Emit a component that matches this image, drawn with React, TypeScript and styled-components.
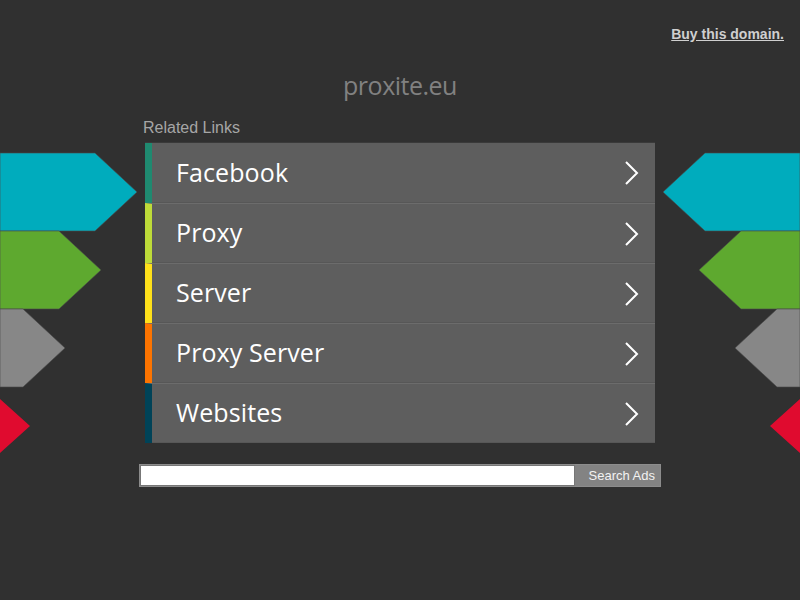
import React from "react";
import styled, { createGlobalStyle } from "styled-components";

const links = [
  { label: "Facebook", color: "#1f8a70" },
  { label: "Proxy", color: "#bedb39" },
  { label: "Server", color: "#ffe11a" },
  { label: "Proxy Server", color: "#fd7400" },
  { label: "Websites", color: "#004358" },
];

const Global = createGlobalStyle`
  html, body {
    margin: 0;
    padding: 0;
    background: #303030;
  }
`;

const App: React.FC = () => {
  return (
    <>
      <Global />
      <Page>
        <Decor width="140" height="460" viewBox="0 0 140 460" $side="left">
          <polygon points="0,153 95,153 137,192 95,231 0,231" fill="#00acbd" stroke="#4a4a4a" strokeWidth="0.6" />
          <polygon points="0,231 59,231 101,270 59,309 0,309" fill="#5ea92f" stroke="#4a4a4a" strokeWidth="0.6" />
          <polygon points="0,309 23,309 65,348 23,387 0,387" fill="#878787" stroke="#4a4a4a" strokeWidth="0.6" />
          <polygon points="0,399 30,426 0,453" fill="#e00b2f" />
        </Decor>
        <Decor width="140" height="460" viewBox="0 0 140 460" $side="right">
          <polygon points="140,153 45,153 3,192 45,231 140,231" fill="#00acbd" stroke="#4a4a4a" strokeWidth="0.6" />
          <polygon points="140,231 81,231 39,270 81,309 140,309" fill="#5ea92f" stroke="#4a4a4a" strokeWidth="0.6" />
          <polygon points="140,309 117,309 75,348 117,387 140,387" fill="#878787" stroke="#4a4a4a" strokeWidth="0.6" />
          <polygon points="140,399 110,426 140,453" fill="#e00b2f" />
        </Decor>

        <TopBar>
          <BuyLink href="#">Buy this domain.</BuyLink>
        </TopBar>

        <Domain>proxite.eu</Domain>

        <Main>
          <Heading>Related Links</Heading>
          <LinkList>
            {links.map((l) => (
              <LinkRow key={l.label} href="#" $accent={l.color}>
                <Label>{l.label}</Label>
                <svg width="16" height="26" viewBox="0 0 16 26">
                  <polyline points="3,2 14,13 3,24" fill="none" stroke="#ffffff" strokeWidth="2" />
                </svg>
              </LinkRow>
            ))}
          </LinkList>
        </Main>

        <SearchForm onSubmit={(e) => e.preventDefault()}>
          <SearchInput type="text" />
          <SearchButton type="submit">Search Ads</SearchButton>
        </SearchForm>
      </Page>
    </>
  );
};

// --- Styles ---

const Page = styled.div`
  position: relative;
  width: 800px;
  height: 600px;
  overflow: hidden;
  background: #303030;
  font-family: "Liberation Sans", Arial, sans-serif;
`;

const Decor = styled.svg<{ $side: "left" | "right" }>`
  position: absolute;
  top: 0;
  ${({ $side }) => ($side === "left" ? "left: 0;" : "right: 0;")}
`;

const TopBar = styled.div`
  display: flex;
  justify-content: flex-end;
  padding: 25px 16px 0 0;
  height: 20px;
`;

const BuyLink = styled.a`
  color: #cfcfcf;
  font-size: 14px;
  font-weight: 700;
  text-decoration: underline;
  line-height: 18px;
`;

const Domain = styled.h1`
  margin: 24px 0 0;
  text-align: center;
  font-family: "Open Sans", sans-serif;
  font-weight: 400;
  font-size: 25px;
  line-height: 32px;
  color: #818181;
  letter-spacing: -0.5px;
`;

const Main = styled.div`
  position: relative;
  width: 510px;
  margin: 16px auto 0;
`;

const Heading = styled.div`
  margin-left: -2px;
  color: #a6a6a6;
  font-size: 16px;
  line-height: 22px;
  height: 25px;
`;

const LinkList = styled.nav`
  display: flex;
  flex-direction: column;
  border-top: 1px solid #3a3a3a;
  background: #5e5e5e;
`;

const LinkRow = styled.a<{ $accent: string }>`
  display: flex;
  align-items: center;
  justify-content: space-between;
  height: 59px;
  padding: 0 16px 0 24px;
  border-left: 7px solid ${({ $accent }) => $accent};
  border-top: 1px solid #6c6c6c;
  color: #ffffff;
  text-decoration: none;
  font-family: "Open Sans", sans-serif;
  font-size: 25px;
  box-shadow: inset 0 -1px 0 #575757;

  &:first-child {
    border-top: none;
    height: 60px;
  }
`;

const Label = styled.span`
  letter-spacing: 0.1px;
  margin-bottom: 3px;
`;

const SearchForm = styled.form`
  display: flex;
  width: 522px;
  height: 23px;
  margin: 21px auto 0;
  background: #838383;
  box-sizing: border-box;
  border: 1px solid #8c8c8c;
`;

const SearchInput = styled.input`
  flex: 1;
  margin: 0;
  border: 1px solid #777;
  background: #ffffff;
  padding: 0 4px;
  outline: none;
`;

const SearchButton = styled.button`
  width: 85px;
  border: none;
  margin: 0;
  background: #838383;
  color: #f2f2f2;
  font-family: "Liberation Sans", Arial, sans-serif;
  font-size: 13px;
  padding: 0 5px 0 0;
  text-align: right;
  cursor: pointer;
`;

export default App;
